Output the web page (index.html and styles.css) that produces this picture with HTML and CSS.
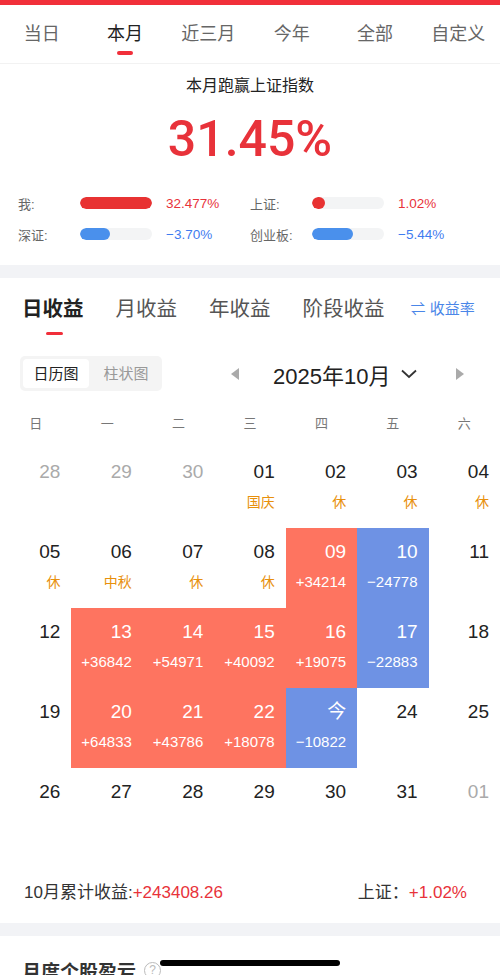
FILE: index.html
```html
<!DOCTYPE html>
<html lang="zh-CN">
<head>
    <meta charset="UTF-8">
    <meta name="viewport" content="width=device-width, initial-scale=1.0">
    <title>收益日历</title>
    <link rel="stylesheet" href="styles.css">
</head>
<body>
    <div class="top-strip"></div>

    <!-- Period tabs -->
    <div class="period-tabs">
        <div class="period-tab">当日</div>
        <div class="period-tab active">本月</div>
        <div class="period-tab">近三月</div>
        <div class="period-tab">今年</div>
        <div class="period-tab">全部</div>
        <div class="period-tab">自定义</div>
    </div>

    <!-- Summary -->
    <div class="summary">
        <div class="summary-title">本月跑赢上证指数</div>
        <div class="summary-value">31.45%</div>
        <div class="compare-grid">
            <div class="compare-item">
                <span class="compare-label">我:</span>
                <span class="bar"><span class="bar-fill up" style="width: 100%"></span></span>
                <span class="compare-value up">32.477%</span>
            </div>
            <div class="compare-item">
                <span class="compare-label">上证:</span>
                <span class="bar"><span class="bar-fill up" style="width: 18%"></span></span>
                <span class="compare-value up">1.02%</span>
            </div>
            <div class="compare-item">
                <span class="compare-label">深证:</span>
                <span class="bar"><span class="bar-fill down" style="width: 42%"></span></span>
                <span class="compare-value down">−3.70%</span>
            </div>
            <div class="compare-item">
                <span class="compare-label">创业板:</span>
                <span class="bar"><span class="bar-fill down" style="width: 57%"></span></span>
                <span class="compare-value down">−5.44%</span>
            </div>
        </div>
    </div>

    <div class="divider"></div>

    <!-- Profit tabs -->
    <div class="profit-tabs">
        <div class="profit-tab active">日收益</div>
        <div class="profit-tab">月收益</div>
        <div class="profit-tab">年收益</div>
        <div class="profit-tab">阶段收益</div>
        <div class="rate-switch">⇌ 收益率</div>
    </div>

    <!-- Calendar toolbar -->
    <div class="cal-toolbar">
        <div class="segmented">
            <div class="segment active">日历图</div>
            <div class="segment">柱状图</div>
        </div>
        <div class="month-nav">
            <span class="tri tri-left"></span>
            <span class="month-label">2025年10月</span>
            <svg class="chevron" width="18" height="12" viewBox="0 0 18 12"><path d="M2 2.5 L9 9 L16 2.5" fill="none" stroke="#333" stroke-width="1.8"/></svg>
            <span class="tri tri-right"></span>
        </div>
    </div>

    <!-- Calendar -->
    <div class="weekdays">
        <div>日</div><div>一</div><div>二</div><div>三</div><div>四</div><div>五</div><div>六</div>
    </div>
    <div class="calendar">
        <div class="day muted"><span class="num">28</span></div>
        <div class="day muted"><span class="num">29</span></div>
        <div class="day muted"><span class="num">30</span></div>
        <div class="day"><span class="num">01</span><span class="note">国庆</span></div>
        <div class="day"><span class="num">02</span><span class="note">休</span></div>
        <div class="day"><span class="num">03</span><span class="note">休</span></div>
        <div class="day"><span class="num">04</span><span class="note">休</span></div>

        <div class="day"><span class="num">05</span><span class="note">休</span></div>
        <div class="day"><span class="num">06</span><span class="note">中秋</span></div>
        <div class="day"><span class="num">07</span><span class="note">休</span></div>
        <div class="day"><span class="num">08</span><span class="note">休</span></div>
        <div class="day gain"><span class="num">09</span><span class="amount">+34214</span></div>
        <div class="day loss"><span class="num">10</span><span class="amount">−24778</span></div>
        <div class="day"><span class="num">11</span></div>

        <div class="day"><span class="num">12</span></div>
        <div class="day gain"><span class="num">13</span><span class="amount">+36842</span></div>
        <div class="day gain"><span class="num">14</span><span class="amount">+54971</span></div>
        <div class="day gain"><span class="num">15</span><span class="amount">+40092</span></div>
        <div class="day gain"><span class="num">16</span><span class="amount">+19075</span></div>
        <div class="day loss"><span class="num">17</span><span class="amount">−22883</span></div>
        <div class="day"><span class="num">18</span></div>

        <div class="day"><span class="num">19</span></div>
        <div class="day gain"><span class="num">20</span><span class="amount">+64833</span></div>
        <div class="day gain"><span class="num">21</span><span class="amount">+43786</span></div>
        <div class="day gain"><span class="num">22</span><span class="amount">+18078</span></div>
        <div class="day loss"><span class="num">今</span><span class="amount">−10822</span></div>
        <div class="day"><span class="num">24</span></div>
        <div class="day"><span class="num">25</span></div>

        <div class="day"><span class="num">26</span></div>
        <div class="day"><span class="num">27</span></div>
        <div class="day"><span class="num">28</span></div>
        <div class="day"><span class="num">29</span></div>
        <div class="day"><span class="num">30</span></div>
        <div class="day"><span class="num">31</span></div>
        <div class="day muted"><span class="num">01</span></div>
    </div>

    <!-- Month total -->
    <div class="month-total">
        <div>10月累计收益:<span class="up">+243408.26</span></div>
        <div>上证：<span class="up">+1.02%</span></div>
    </div>

    <div class="divider"></div>

    <div class="section-title">
        月度个股盈亏
        <span class="help">?</span>
    </div>

    <div class="home-indicator"></div>
</body>
</html>
```

FILE: styles.css
```css
/* Base */
body {
    margin: 0;
    width: 500px;
    height: 975px;
    overflow: hidden;
    position: relative;
    background-color: white;
    font-family: "Liberation Sans", "Noto Sans CJK SC", sans-serif;
    color: #222;
}

.top-strip {
    height: 5px;
    background-color: #f12f3a;
}

.up {
    color: #e8323a;
}

.down {
    color: #3f7cf0;
}

/* Period tabs */
.period-tabs {
    display: flex;
    height: 58px;
    border-bottom: 1px solid #f2f2f2;
}

.period-tab {
    flex: 1;
    position: relative;
    text-align: center;
    font-size: 18px;
    line-height: 58px;
    color: #666;
}

.period-tab.active {
    color: #222;
}

.period-tab.active::after {
    content: "";
    position: absolute;
    left: 50%;
    bottom: 8px;
    width: 16px;
    height: 4px;
    margin-left: -8px;
    border-radius: 2px;
    background-color: #f12f3a;
}

/* Summary */
.summary {
    padding: 11px 0 22px;
}

.summary-title {
    text-align: center;
    font-size: 16px;
    line-height: 22px;
}

.summary-value {
    margin-top: 12px;
    text-align: center;
    font-family: Roboto, "Liberation Sans", sans-serif;
    font-weight: 500;
    font-size: 50px;
    line-height: 60px;
    color: #e8323a;
}

.compare-grid {
    display: grid;
    grid-template-columns: 232px 1fr;
    row-gap: 13px;
    margin-top: 25px;
    padding-left: 18px;
}

.compare-item {
    display: flex;
    align-items: center;
    height: 18px;
    font-size: 13px;
}

.compare-label {
    width: 62px;
    color: #666;
}

.compare-value {
    font-size: 13.5px;
}

.bar {
    width: 72px;
    height: 12px;
    border-radius: 6px;
    background-color: #f3f4f5;
    overflow: hidden;
    margin-right: 14px;
}

.bar-fill {
    display: block;
    height: 100%;
    border-radius: 6px;
}

.bar-fill.up {
    background-color: #e83232;
}

.bar-fill.down {
    background-color: #4a90ec;
}

.divider {
    height: 13px;
    background-color: #f2f3f6;
}

/* Profit tabs */
.profit-tabs {
    display: flex;
    align-items: center;
    gap: 32px;
    height: 58px;
    padding: 0 0 0 22px;
}

.profit-tab {
    position: relative;
    font-size: 20.5px;
    color: #555;
}

.profit-tab.active {
    font-weight: bold;
    color: #222;
}

.profit-tab.active::after {
    content: "";
    position: absolute;
    left: 50%;
    bottom: -13px;
    width: 17px;
    height: 3px;
    margin-left: -7px;
    border-radius: 2px;
    background-color: #f12f3a;
}

.rate-switch {
    margin-left: -6px;
    font-size: 15px;
    color: #4a86e8;
}

/* Calendar toolbar */
.cal-toolbar {
    display: flex;
    align-items: center;
    height: 35px;
    margin-top: 20px;
    padding-left: 20px;
}

.segmented {
    display: flex;
    gap: 4px;
    padding: 3px;
    background-color: #f4f4f4;
    border-radius: 5px;
}

.segment {
    width: 66px;
    height: 29px;
    line-height: 29px;
    text-align: center;
    font-size: 15px;
    color: #999;
    border-radius: 4px;
}

.segment.active {
    background-color: white;
    color: #222;
}

.month-nav {
    display: flex;
    align-items: center;
    margin-left: 69px;
}

.tri {
    width: 0;
    height: 0;
    border-top: 6px solid transparent;
    border-bottom: 6px solid transparent;
}

.tri-left {
    border-right: 8px solid #aaa;
    margin-right: 34px;
}

.tri-right {
    border-left: 8px solid #aaa;
    margin-left: 38px;
}

.month-label {
    font-size: 22px;
    color: #222;
}

.chevron {
    margin-left: 10px;
}

/* Calendar grid */
.weekdays {
    display: grid;
    grid-template-columns: repeat(7, 1fr);
    margin-top: 23px;
    font-size: 13px;
    color: #777;
    line-height: 20px;
    text-align: center;
}

.calendar {
    display: grid;
    grid-template-columns: repeat(7, 1fr);
    grid-auto-rows: 80px;
    margin-top: 14px;
}

.day {
    display: flex;
    flex-direction: column;
    align-items: flex-end;
    padding: 13px 11px 0 0;
}

.num {
    font-size: 19px;
    line-height: 22px;
    color: #222;
}

.muted .num {
    color: #aaa;
}

.note {
    margin-top: 9px;
    font-size: 14px;
    line-height: 20px;
    color: #e8900c;
}

.amount {
    margin-top: 9px;
    font-size: 15px;
    line-height: 20px;
    color: white;
}

.gain {
    background-color: #fe7460;
}

.loss {
    background-color: #6e92e4;
}

.gain .num,
.loss .num {
    color: white;
}

/* Month total */
.month-total {
    display: flex;
    justify-content: space-between;
    align-items: center;
    box-sizing: border-box;
    height: 75px;
    padding: 10px 33px 0 24px;
    font-size: 17px;
    color: #333;
}

.section-title {
    display: flex;
    align-items: center;
    gap: 8px;
    padding: 21px 0 0 22px;
    font-size: 19px;
    font-weight: bold;
    color: #333;
}

.help {
    display: inline-block;
    width: 15px;
    height: 15px;
    line-height: 15px;
    text-align: center;
    border: 1.5px solid #bbb;
    border-radius: 50%;
    font-size: 12px;
    font-weight: normal;
    color: #bbb;
}

/* iOS home indicator over the content */
.home-indicator {
    position: absolute;
    left: 160px;
    top: 960px;
    width: 180px;
    height: 6px;
    border-radius: 3px;
    background-color: black;
}
```
